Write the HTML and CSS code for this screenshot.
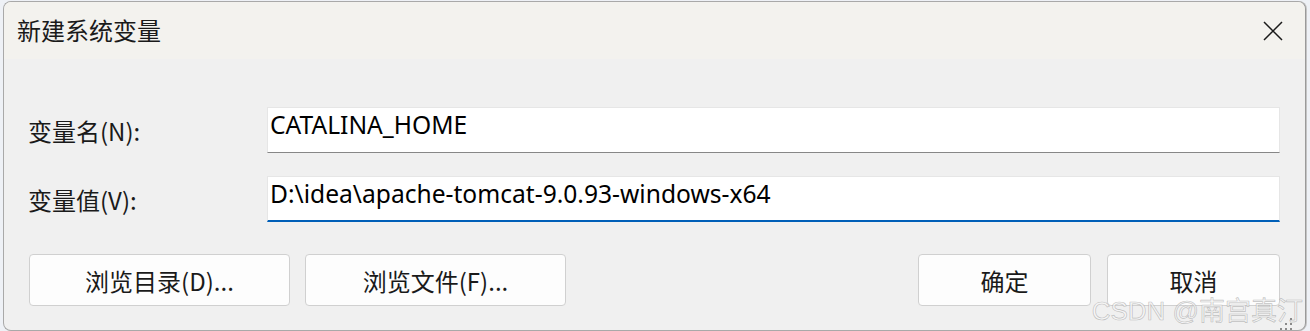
FILE: index.html
```html
<!DOCTYPE html>
<html lang="zh-CN">
<head>
    <meta charset="UTF-8">
    <meta name="viewport" content="width=device-width, initial-scale=1.0">
    <title>新建系统变量</title>
    <link rel="stylesheet" href="styles.css">
</head>
<body>
    <div class="window">
        <div class="titlebar">
            <span class="title">新建系统变量</span>
            <button class="close-btn" aria-label="关闭">
                <svg width="20" height="20" viewBox="0 0 20 20">
                    <path d="M1 1 L19 19 M19 1 L1 19" stroke="#1a1a1a" stroke-width="1.5" fill="none"/>
                </svg>
            </button>
        </div>

        <div class="content">
            <div class="fields">
                <label class="label" for="varName">变量名(N):</label>
                <div class="input">CATALINA_HOME</div>

                <label class="label" for="varValue">变量值(V):</label>
                <div class="input focused">D:\idea\apache-tomcat-9.0.93-windows-x64</div>
            </div>

            <div class="actions">
                <div class="group">
                    <button class="btn wide">浏览目录(D)...</button>
                    <button class="btn wide">浏览文件(F)...</button>
                </div>
                <div class="group">
                    <button class="btn">确定</button>
                    <button class="btn">取消</button>
                </div>
            </div>
        </div>

        <!-- watermark from the screenshot -->
        <div class="watermark">CSDN @南宫真汀</div>
        <svg class="grip" width="14" height="12" viewBox="0 0 14 12">
            <rect x="10" y="0" width="2" height="2" fill="#8a8a8a"/>
            <rect x="5" y="5" width="2" height="2" fill="#8a8a8a"/>
            <rect x="10" y="5" width="2" height="2" fill="#8a8a8a"/>
            <rect x="0" y="10" width="2" height="2" fill="#8a8a8a"/>
            <rect x="5" y="10" width="2" height="2" fill="#8a8a8a"/>
            <rect x="10" y="10" width="2" height="2" fill="#8a8a8a"/>
        </svg>
    </div>
</body>
</html>
```

FILE: styles.css
```css
body {
    margin: 0;
    background-color: #eef1f6;
    font-family: "Noto Sans CJK SC", sans-serif;
    color: #1a1a1a;
    overflow: hidden;
}
.window {
    position: relative;
    margin: 1px 4px 0 3px;
    height: 328px;
    border: 1px solid #a9a9a9;
    border-right-color: #9a9a9a;
    border-radius: 8px;
    background-color: #f0f0f0;
    box-shadow: 1px 0 0 #c4c4c4;
    overflow: hidden;
}
.titlebar {
    height: 57px;
    display: flex;
    align-items: center;
    justify-content: space-between;
    padding: 0 13px;
    background-color: #f3f2ee;
}
.title {
    font-size: 24px;
    margin-top: -2px;
}
.close-btn {
    border: none;
    background: none;
    padding: 0;
    margin-right: 9px;
    width: 20px;
    height: 20px;
    display: flex;
}
.content {
    padding: 48px 25px 0 24px;
}
.fields {
    display: grid;
    grid-template-columns: 239px 1fr;
    row-gap: 23px;
    align-items: center;
}
.label {
    font-size: 24px;
}
.input {
    box-sizing: border-box;
    height: 46px;
    padding: 0 2px;
    background-color: #fff;
    border: 1px solid #e6e6e6;
    border-bottom: 1px solid #878787;
    font-family: "Noto Sans", sans-serif;
    font-size: 24.6px;
    line-height: 34px;
    color: #000;
}
.input.focused {
    border-bottom: 2px solid #005fb8;
}
.actions {
    margin-top: 32px;
    padding-left: 1px;
    display: flex;
    justify-content: space-between;
}
.group {
    display: flex;
    gap: 15px;
}
.group + .group {
    gap: 16px;
}
.btn {
    width: 173px;
    height: 52px;
    background-color: #fdfdfd;
    border: 1px solid #d0d0d0;
    border-radius: 4px;
    font-family: "Noto Sans CJK SC", sans-serif;
    font-size: 24px;
    color: #1a1a1a;
    padding: 0;
}
.btn.wide {
    width: 261px;
}
.watermark {
    position: absolute;
    right: 2px;
    bottom: 3px;
    font-family: "Liberation Sans", "Noto Sans CJK SC", sans-serif;
    font-size: 26px;
    color: rgba(245, 245, 245, 0.85);
    -webkit-text-stroke: 0.7px rgba(130, 130, 130, 0.45);
}
.grip {
    position: absolute;
    right: 11px;
    bottom: 0;
}
```
